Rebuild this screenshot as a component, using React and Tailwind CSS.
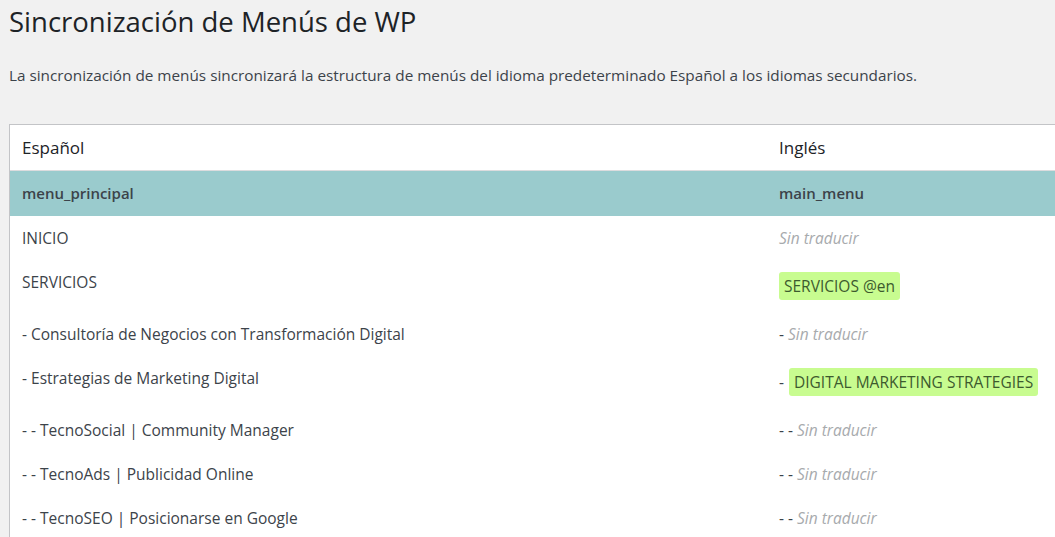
const rows = [
  { es: "INICIO", en: { prefix: "", text: "Sin traducir", missing: true } },
  { es: "SERVICIOS", en: { prefix: "", text: "SERVICIOS @en", missing: false } },
  { es: "- Consultoría de Negocios con Transformación Digital", en: { prefix: "- ", text: "Sin traducir", missing: true } },
  { es: "- Estrategias de Marketing Digital", en: { prefix: "- ", text: "DIGITAL MARKETING STRATEGIES", missing: false } },
  { es: "- - TecnoSocial | Community Manager", en: { prefix: "- - ", text: "Sin traducir", missing: true } },
  { es: "- - TecnoAds | Publicidad Online", en: { prefix: "- - ", text: "Sin traducir", missing: true } },
  { es: "- - TecnoSEO | Posicionarse en Google", en: { prefix: "- - ", text: "Sin traducir", missing: true } },
];

function Translation({ en }) {
  if (en.missing) {
    return (
      <span>
        {en.prefix}
        <span className="italic text-[#a7aaad]">{en.text}</span>
      </span>
    );
  }
  return (
    <span>
      {en.prefix}
      <span className={`inline-block rounded-[3px] bg-[#c8fc90] px-[5px] py-[4px] text-[#3d5a2e] ${en.prefix ? "ml-[1px]" : ""}`}>{en.text}</span>
    </span>
  );
}

export default function App() {
  return (
    <div className="min-h-screen w-[1055px] overflow-hidden bg-[#f1f1f1] pl-[9px] pt-[2px] text-[#3c434a]" style={{ fontFamily: '"Segoe UI", "Open Sans", sans-serif' }}>
      <h1 className="text-[27.5px] font-normal leading-[40px] text-[#1d2327]">Sincronización de Menús de WP</h1>
      <p className="mt-[22px] text-[15.3px] leading-[22px]">
        La sincronización de menús sincronizará la estructura de menús del idioma predeterminado Español a los idiomas secundarios.
      </p>
      <div className="mt-[38px] w-[1100px] border-l border-t border-[#c3c4c7] bg-white">
        <div className="flex h-[46px] items-center border-b border-[#dcdcde] text-[17px] text-[#1d2327]">
          <div className="w-[757px] pl-[12px]">Español</div>
          <div className="pl-[12px]">Inglés</div>
        </div>
        <div className="flex h-[45px] items-center bg-[#9acbcd] text-[15px] font-semibold text-[#3c434a]">
          <div className="w-[757px] pl-[12px]">menu_principal</div>
          <div className="pl-[12px]">main_menu</div>
        </div>
        {rows.map((r) => (
          <div key={r.es} className="flex items-start py-[12px] text-[15.5px] leading-[20px]">
            <div className="w-[757px] pl-[12px]">{r.es}</div>
            <div className="pl-[12px]">
              <Translation en={r.en} />
            </div>
          </div>
        ))}
      </div>
    </div>
  );
}
